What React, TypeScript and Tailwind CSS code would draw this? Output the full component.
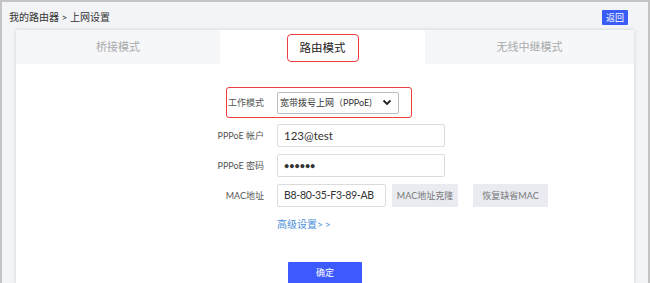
import React from "react";

const font = { fontFamily: 'Lato, "Noto Sans CJK SC", sans-serif' };

function Label({ children }: { children: React.ReactNode }) {
  return (
    <div className="w-[69px] mr-[13px] text-right text-[9px] text-[#555] shrink-0 leading-none whitespace-nowrap">{children}</div>
  );
}

export default function App() {
  return (
    <div
      className="w-[650px] h-[283px] overflow-hidden bg-[#f3f4f7] border-t-2 border-l-2 border-r-2 border-[#c4c4c4] flex flex-col"
      style={font}
    >
      <div className="h-[28px] shrink-0 flex items-center justify-between pl-[7px] pr-[20px]">
        <div className="text-[10px] text-[#333] leading-none mt-[2px] whitespace-nowrap">我的路由器 &gt; 上网设置</div>
        <div className="w-[26px] h-[15px] bg-[#3a5cf6] text-white text-[9px] flex items-center justify-center rounded-[1px] leading-none mt-[2px]">
          返回
        </div>
      </div>
      <div className="mx-[14px] flex-1 bg-white shadow-[0_0_4px_rgba(0,0,0,0.15)] flex flex-col">
        <div className="grid grid-cols-[204px_205px_1fr] h-[34px] shrink-0">
          <div className="bg-[#f6f7f9] flex items-center justify-center text-[11px] text-[#aaa]">桥接模式</div>
          <div className="bg-white flex items-center justify-center relative">
            <div className="w-[72px] h-[28px] border-[1.5px] border-[#f03c3c] rounded-[4px] flex items-center justify-center text-[11.5px] text-[#222] mt-[2px]">
              路由模式
            </div>
          </div>
          <div className="bg-[#f6f7f9] flex items-center justify-center text-[11px] text-[#aaa]">无线中继模式</div>
        </div>
        <div className="flex flex-col pl-[179px] pt-[23px]">
          <div className="relative flex items-center h-[31px]">
            <div className="absolute left-[31px] top-0 w-[186px] h-[31px] border-[1.5px] border-[#f03c3c] rounded-[3px]" />
            <Label>工作模式</Label>
            <div className="w-[122px] h-[22px] border border-[#bdbdbd] rounded-[2px] bg-white flex items-center justify-between pl-[2px] pr-[6px]">
              <span className="text-[9px] text-[#333] leading-none whitespace-nowrap">宽带拨号上网（PPPoE)</span>
              <svg width="10" height="7" viewBox="0 0 10 7">
                <path d="M1.5 1.5 L5 5 L8.5 1.5" fill="none" stroke="#222" strokeWidth="1.8" />
              </svg>
            </div>
          </div>
          <div className="flex items-center mt-[6px]">
            <Label>PPPoE 帐户</Label>
            <div className="w-[168px] h-[23px] border border-[#dcdcdc] rounded-[2px] flex items-center pl-[6px] text-[11.5px] text-[#333] whitespace-nowrap">
              123@test
            </div>
          </div>
          <div className="flex items-center mt-[7px]">
            <Label>PPPoE 密码</Label>
            <div className="w-[168px] h-[23px] border border-[#dcdcdc] rounded-[2px] flex items-center pl-[6px] text-[9px] font-bold text-[#333]">
              ••••••
            </div>
          </div>
          <div className="flex items-center mt-[7px]">
            <Label>MAC地址</Label>
            <div className="w-[109px] h-[23px] border border-[#dcdcdc] rounded-[2px] flex items-center pl-[6px] text-[10.5px] tracking-[-0.3px] text-[#333] whitespace-nowrap">
              B8-80-35-F3-89-AB
            </div>
            <div className="flex gap-[15px] ml-[6px]">
              <div className="w-[66px] h-[23px] bg-[#e9ebf1] flex items-center justify-center text-[9px] text-[#777] whitespace-nowrap">MAC地址克隆</div>
              <div className="w-[75px] h-[23px] bg-[#e9ebf1] flex items-center justify-center text-[9px] text-[#777] whitespace-nowrap">恢复缺省MAC</div>
            </div>
          </div>
          <div className="ml-[82px] mt-[12px] text-[10px] text-[#4b8fd8] leading-none whitespace-nowrap">
            高级设置<span className="tracking-[2px]">&gt;&gt;</span>
          </div>
          <div className="ml-[93px] mt-[33px] w-[74px] h-[22px] bg-[#3d5afe] text-white text-[9px] flex items-center justify-center rounded-[1px]">
            确定
          </div>
        </div>
      </div>
    </div>
  );
}
